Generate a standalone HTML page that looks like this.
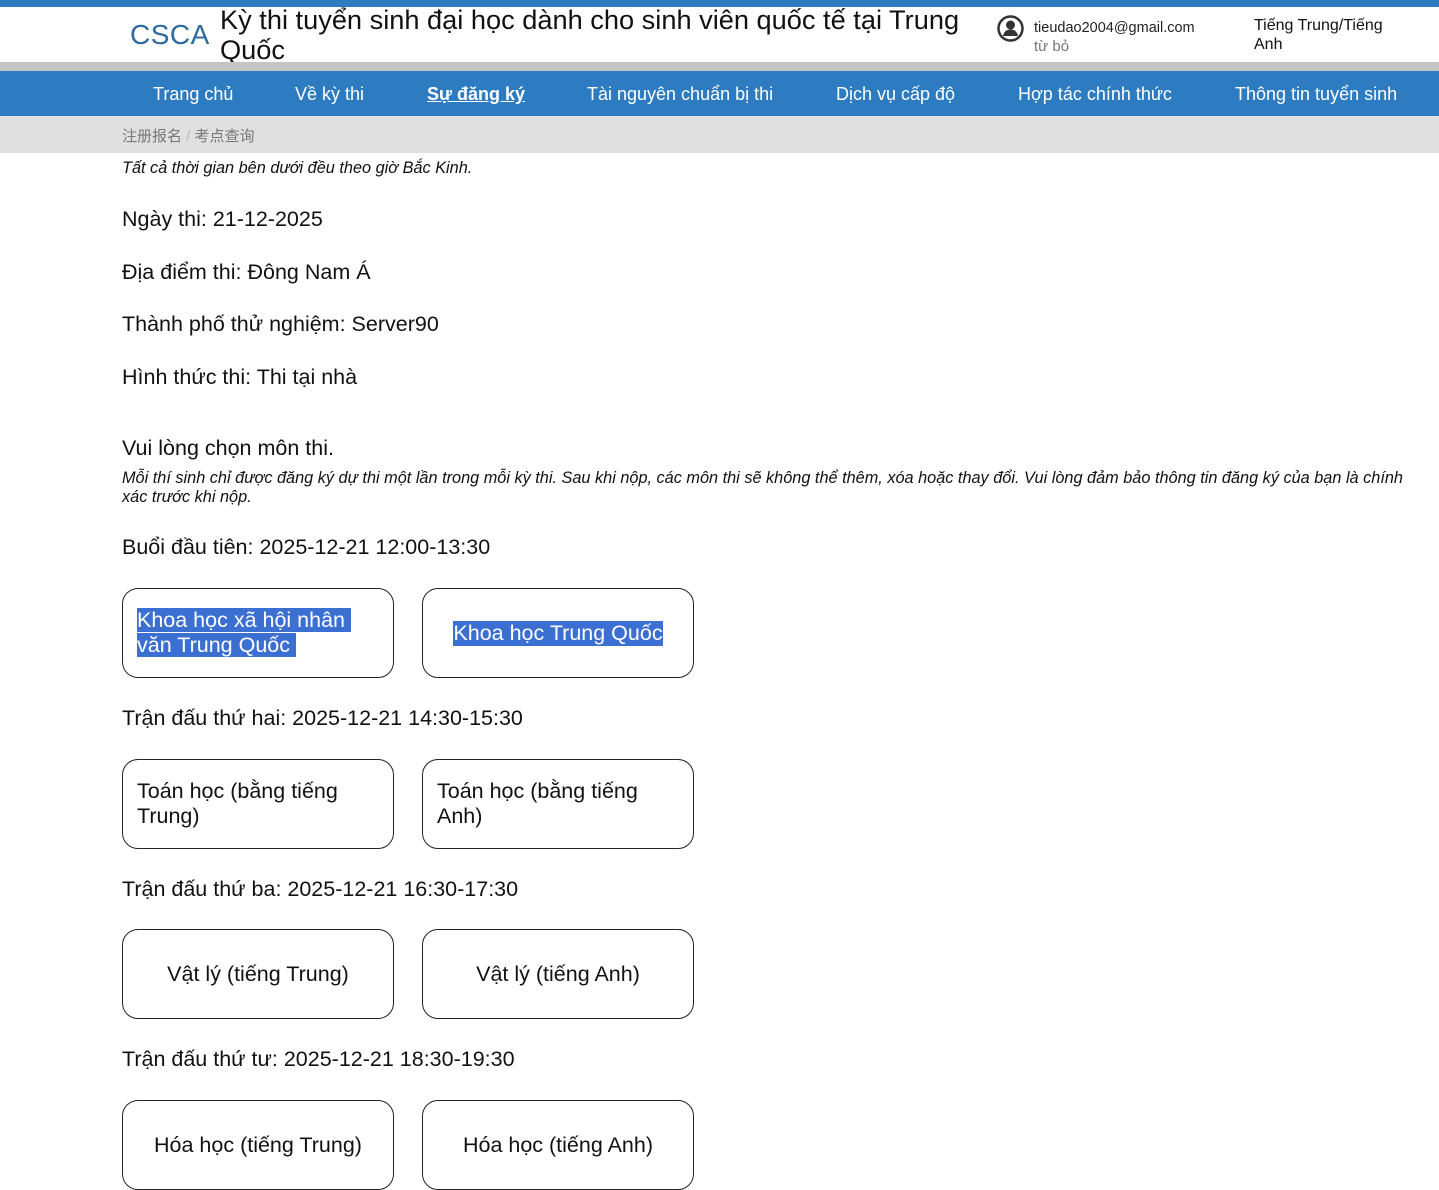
<!DOCTYPE html>
<html><head><meta charset="utf-8">
<style>
*{margin:0;padding:0;box-sizing:border-box}
body{width:1439px;height:1190px;overflow:hidden;background:#fff;font-family:"Liberation Sans",Arial,sans-serif;color:#111;position:relative}
.a{position:absolute;white-space:nowrap}
.topbar{position:absolute;left:0;top:0;width:1439px;height:7px;background:#2e7cc0}
.gray{position:absolute;left:0;top:62px;width:1439px;height:9px;background:#c4c4c4}
.nav{position:absolute;left:0;top:71px;width:1439px;height:45px;background:#2d7bc0}
.nav span{position:absolute;top:13px;color:#fff;font-size:18px;white-space:nowrap}
.bc{position:absolute;left:0;top:116px;width:1439px;height:37px;background:#e0e0e0}
.btn{position:absolute;width:272px;height:90px;border:1.5px solid #222;border-radius:16px;font-size:21.5px;display:flex;align-items:center;padding-left:14px;line-height:25px}
.btn.c{justify-content:center;padding-left:0}
.sel{background:#3b6fd1;color:#fff}
.t{font-size:21.5px}
.i{font-style:italic;font-size:16.3px}
</style></head><body>
<div class="topbar"></div>
<div class="a" style="left:130px;top:19px;font-size:28px;color:#2d6aa0;letter-spacing:0.5px">CSCA</div>
<div class="a" style="left:220px;top:5px;font-size:27.2px;line-height:30px;color:#111">Kỳ thi tuyển sinh đại học dành cho sinh viên quốc tế tại Trung<br>Quốc</div>
<svg class="a" style="left:996px;top:14px" width="29" height="29" viewBox="0 0 29 29"><circle cx="14.5" cy="14.5" r="12" fill="none" stroke="#333" stroke-width="2.5"/><circle cx="14.5" cy="11" r="4.5" fill="#333"/><path d="M7 22c1-5 4-6.5 7.5-6.5s6.5 1.5 7.5 6.5z" fill="#333"/></svg>
<div class="a" style="left:1034px;top:20px;font-size:14.5px;color:#222">tieudao2004@gmail.com</div>
<div class="a" style="left:1034px;top:38px;font-size:15px;color:#777">từ bỏ</div>
<div class="a" style="left:1254px;top:16px;font-size:16px;line-height:19px;color:#111">Tiếng Trung/Tiếng<br>Anh</div>
<div class="gray"></div>
<div class="nav">
<span style="left:153px">Trang chủ</span>
<span style="left:295px">Về kỳ thi</span>
<span style="left:427px;font-weight:bold;text-decoration:underline">Sự đăng ký</span>
<span style="left:587px">Tài nguyên chuẩn bị thi</span>
<span style="left:836px">Dịch vụ cấp độ</span>
<span style="left:1018px">Hợp tác chính thức</span>
<span style="left:1235px">Thông tin tuyển sinh</span>
</div>
<div class="bc"><div class="a" style="left:122px;top:9px;font-size:15px;color:#777;font-family:'Liberation Sans','Noto Sans CJK SC',sans-serif">注册报名 <span style="color:#bbb">/</span> 考点查询</div></div>
<div class="a i" style="left:122px;top:159px">Tất cả thời gian bên dưới đều theo giờ Bắc Kinh.</div>
<div class="a t" style="left:122px;top:207px">Ngày thi: 21-12-2025</div>
<div class="a t" style="left:122px;top:260px">Địa điểm thi: Đông Nam Á</div>
<div class="a t" style="left:122px;top:312px">Thành phố thử nghiệm: Server90</div>
<div class="a t" style="left:122px;top:365px">Hình thức thi: Thi tại nhà</div>
<div class="a t" style="left:122px;top:436px">Vui lòng chọn môn thi.</div>
<div class="a i" style="left:122px;top:469px;line-height:19px">Mỗi thí sinh chỉ được đăng ký dự thi một lần trong mỗi kỳ thi. Sau khi nộp, các môn thi sẽ không thể thêm, xóa hoặc thay đổi. Vui lòng đảm bảo thông tin đăng ký của bạn là chính<br>xác trước khi nộp.</div>
<div class="a t" style="left:122px;top:535px">Buổi đầu tiên: 2025-12-21 12:00-13:30</div>
<div class="btn" style="left:122px;top:588px"><div><span class="sel">Khoa học xã hội nhân&nbsp;</span><br><span class="sel">văn Trung Quốc&nbsp;</span></div></div>
<div class="btn c" style="left:422px;top:588px"><span class="sel">Khoa học Trung Quốc</span></div>
<div class="a t" style="left:122px;top:706px">Trận đấu thứ hai: 2025-12-21 14:30-15:30</div>
<div class="btn" style="left:122px;top:759px">Toán học (bằng tiếng<br>Trung)</div>
<div class="btn" style="left:422px;top:759px">Toán học (bằng tiếng<br>Anh)</div>
<div class="a t" style="left:122px;top:877px">Trận đấu thứ ba: 2025-12-21 16:30-17:30</div>
<div class="btn c" style="left:122px;top:929px">Vật lý (tiếng Trung)</div>
<div class="btn c" style="left:422px;top:929px">Vật lý (tiếng Anh)</div>
<div class="a t" style="left:122px;top:1047px">Trận đấu thứ tư: 2025-12-21 18:30-19:30</div>
<div class="btn c" style="left:122px;top:1100px">Hóa học (tiếng Trung)</div>
<div class="btn c" style="left:422px;top:1100px">Hóa học (tiếng Anh)</div>
</body></html>
